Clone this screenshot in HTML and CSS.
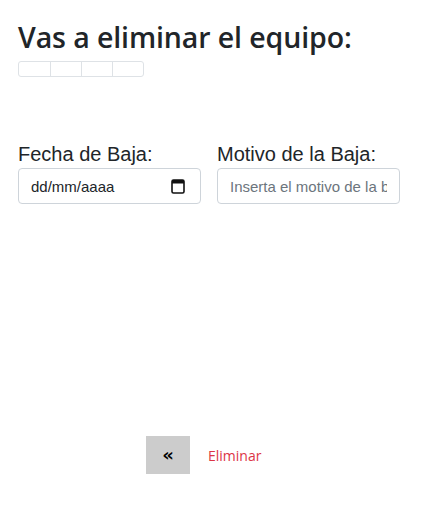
FILE: index.html
```html
<!DOCTYPE html>
<html lang="es">
<head>
<meta charset="utf-8">
<link rel="stylesheet" href="styles.css">
</head>
<body>
<main class="page">
  <h2 class="title">Vas a eliminar el equipo:</h2>
  <table class="team">
    <tr><td></td><td></td><td></td><td></td></tr>
  </table>
  <div class="fields">
    <div class="field">
      <label class="label" for="fecha">Fecha de Baja:</label>
      <div class="input date">
        <span>dd/mm/aaaa</span>
        <svg class="cal" width="14" height="16" viewBox="0 0 14 16"><rect x="1" y="2" width="12" height="13" rx="1.5" fill="none" stroke="#111" stroke-width="1.6"/><rect x="1" y="2" width="12" height="3.5" fill="#111"/></svg>
      </div>
    </div>
    <div class="field">
      <label class="label" for="motivo">Motivo de la Baja:</label>
      <input id="motivo" class="input text" placeholder="Inserta el motivo de la baja">
    </div>
  </div>
  <div class="actions">
    <button class="back" type="button">«</button>
    <a class="delete" href="#">Eliminar</a>
  </div>
</main>
</body>
</html>
```

FILE: styles.css
```css
* { box-sizing: border-box; }
html, body { margin: 0; padding: 0; background: #fff; }
.page {
  padding: 18px 18px 0 18px;
  font-family: "Liberation Sans", Arial, sans-serif;
  color: #212529;
}
.title {
  margin: 0;
  font-family: "Open Sans", "Noto Sans", sans-serif;
  font-weight: 600;
  font-size: 28.5px;
  line-height: 38px;
  color: #212529;
  letter-spacing: -0.1px;
}
.team {
  margin-top: 5px;
  border-collapse: separate;
  border-spacing: 0;
  border: 1px solid #dee2e6;
  border-radius: 3px;
  height: 16px;
}
.team td {
  width: 31px;
  height: 14px;
  padding: 0;
  border-left: 1px solid #dee2e6;
}
.team td:first-child { border-left: none; }
.fields {
  display: flex;
  gap: 16px;
  margin-top: 65px;
}
.field { display: flex; flex-direction: column; }
.label {
  font-size: 20px;
  line-height: 24px;
  color: #212529;
  margin-bottom: 2px;
}
.input {
  height: 36px;
  border: 1px solid #ced4da;
  border-radius: 4px;
  background: #fff;
  font-family: "Liberation Sans", Arial, sans-serif;
  font-size: 15px;
  color: #212529;
}
.date {
  width: 183px;
  display: flex;
  align-items: center;
  justify-content: space-between;
  padding: 0 15px 0 12px;
}
.cal { display: block; }
.text {
  width: 183px;
  padding: 0 12px;
  outline: none;
}
.text::placeholder { color: #6c757d; }
.actions {
  display: flex;
  align-items: center;
  gap: 18px;
  margin-top: 232px;
  padding-left: 128px;
}
.back {
  width: 44px;
  height: 38px;
  border: none;
  background: #cccccc;
  font-family: "DejaVu Sans", sans-serif;
  font-weight: bold;
  font-size: 18px;
  color: #000;
  padding: 0;
  line-height: 1;
}
.delete {
  font-family: "Open Sans", "Noto Sans", sans-serif;
  font-size: 14px;
  color: #dc3545;
  text-decoration: none;
}
```
